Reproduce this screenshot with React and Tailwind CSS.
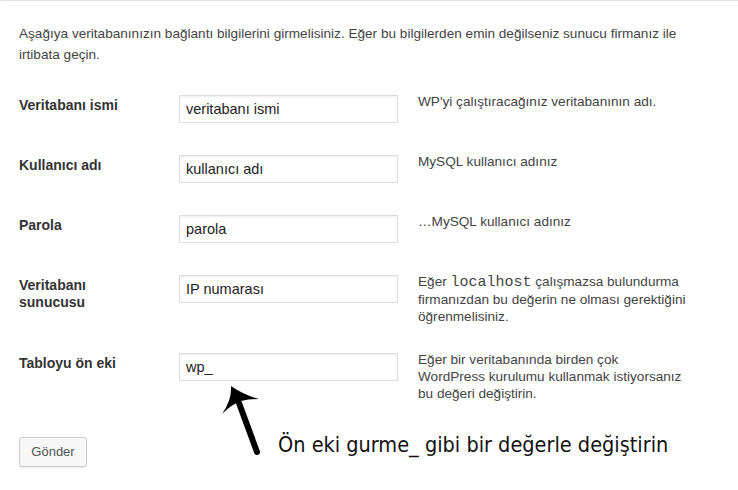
import React from "react";

const FIELDS = [
  {
    key: "dbname",
    label: "Veritabanı ismi",
    value: "veritabanı ismi",
    help: "WP'yi çalıştıracağınız veritabanının adı.",
    height: "h-[60px]",
  },
  {
    key: "uname",
    label: "Kullanıcı adı",
    value: "kullanıcı adı",
    help: "MySQL kullanıcı adınız",
    height: "h-[60px]",
  },
  {
    key: "pwd",
    label: "Parola",
    value: "parola",
    help: "…MySQL kullanıcı adınız",
    height: "h-[60px]",
  },
  {
    key: "dbhost",
    label: (
      <>
        Veritabanı <br /> sunucusu
      </>
    ),
    value: "IP numarası",
    help: (
      <>
        Eğer{" "}
        <code className="font-['Liberation_Mono',monospace] text-[15px] leading-[17px]">
          localhost
        </code>{" "}
        çalışmazsa bulundurma
        <br />
        firmanızdan bu değerin ne olması gerektiğini
        <br />
        öğrenmelisiniz.
      </>
    ),
    height: "h-[78px]",
  },
  {
    key: "prefix",
    label: "Tabloyu ön eki",
    value: "wp_",
    help: (
      <>
        Eğer bir veritabanında birden çok
        <br />
        WordPress kurulumu kullanmak istiyorsanız
        <br />
        bu değeri değiştirin.
      </>
    ),
    height: "h-[78px]",
  },
];

function FieldRow({ field }) {
  return (
    <div className={`flex items-start ${field.height}`}>
      <div className="w-[160px] pt-[17px] text-[14px] leading-[17px] font-bold text-[#333]">
        {field.label}
      </div>
      <input
        defaultValue={field.value}
        className="mt-[15px] w-[219px] h-[28px] px-[6px] border border-[#ddd] shadow-[inset_0_1px_2px_rgba(0,0,0,0.07)] text-[14.5px] text-[#222] outline-none"
      />
      <p className="ml-[20px] mt-[13px] w-[300px] text-[13.6px] leading-[17px] text-[#444] whitespace-nowrap">
        {field.help}
      </p>
    </div>
  );
}

function Arrow() {
  return (
    <svg
      className="absolute left-[215px] top-[380px]"
      width="60"
      height="80"
      viewBox="0 0 60 80"
    >
      <path d="M42 71 L24 22" stroke="#000" strokeWidth="6" strokeLinecap="round" />
      <path
        d="M16 5 Q17 19 7 33 Q17 23 26 20 Q34 18 44 18 Q29 14 16 5 Z"
        fill="#000"
      />
    </svg>
  );
}

export default function App() {
  return (
    <div className="relative w-[738px] h-[490px] bg-white border-t border-[#e3e3e3] font-['Liberation_Sans',Arial,sans-serif] overflow-hidden">
      <div className="ml-[8px] mt-[4px] border-t border-[#f3f3f3]" />
      <p className="px-[19px] pt-[17px] text-[13.6px] leading-[21px] text-[#444]">
        Aşağıya veritabanınızın bağlantı bilgilerini girmelisiniz. Eğer bu
        bilgilerden emin değilseniz sunucu firmanız ile irtibata geçin.
      </p>

      <div className="mt-[15px] px-[19px] flex flex-col">
        {FIELDS.map((f) => (
          <FieldRow key={f.key} field={f} />
        ))}
      </div>

      <div className="px-[19px] mt-[21px]">
        <button className="w-[68px] h-[30px] rounded-[3px] border border-[#ccc] bg-[#f7f7f7] shadow-[0_1px_0_rgba(0,0,0,0.08)] text-[13px] text-[#555]">
          Gönder
        </button>
      </div>

      <Arrow />
      <div className="absolute left-[278px] top-[427px] text-[21.5px] leading-[34px] text-[#111] font-['Liberation_Sans_Narrow','DejaVu_Sans_Condensed',sans-serif] whitespace-nowrap">
        Ön eki gurme_ gibi bir değerle değiştirin
      </div>
    </div>
  );
}
